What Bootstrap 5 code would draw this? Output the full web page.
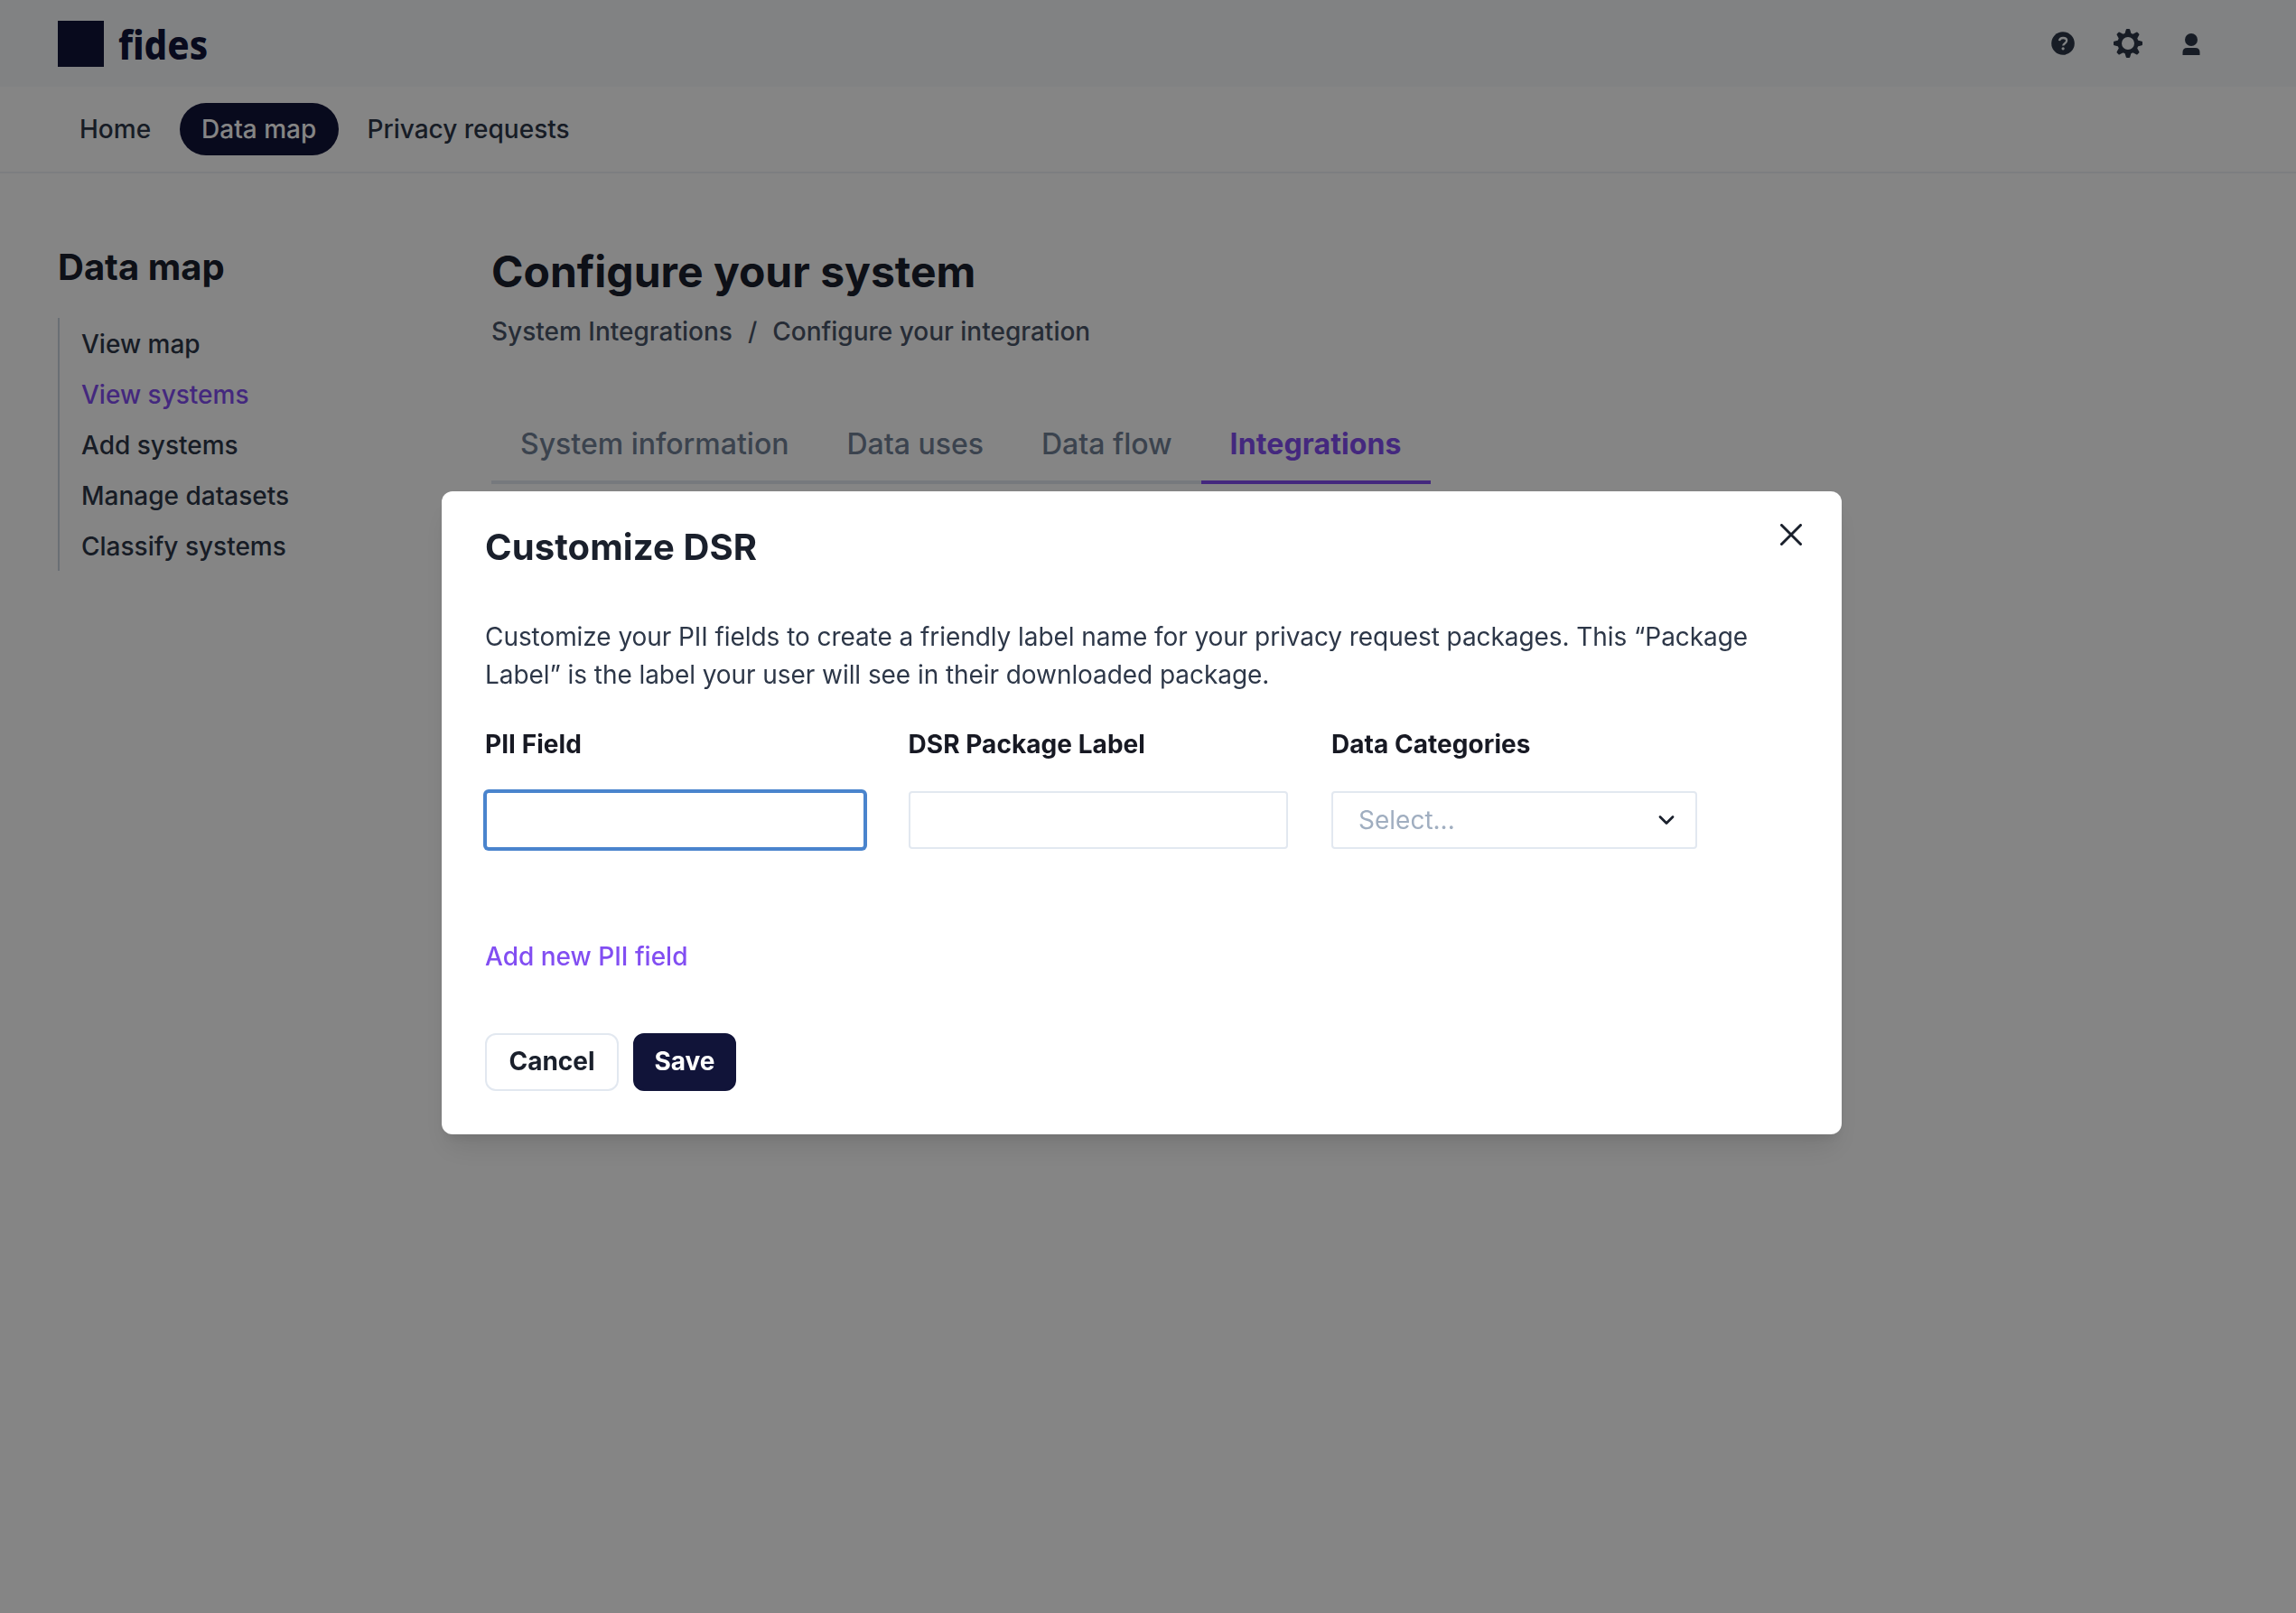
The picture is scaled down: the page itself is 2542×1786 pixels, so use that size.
<!DOCTYPE html>
<html lang="en">
<head>
<meta charset="utf-8">
<title>fides</title>
<link href="https://cdn.jsdelivr.net/npm/bootstrap@5.3.0/dist/css/bootstrap.min.css" rel="stylesheet">
<style>
body{font-family:Inter,"Liberation Sans",sans-serif;font-size:28px;line-height:42px;color:#1a202c;background:#fff;height:1786px;overflow:hidden}
.topbar{height:96px;background:#f7fafc;padding:0 105px 0 64px}
.logo-box{width:51px;height:51px;background:#111439}
.wordmark{font-family:"Noto Sans",sans-serif;font-weight:800;font-size:45px;line-height:64px;color:#111439;margin:1px 0 0 16px;transform:scaleX(.895);transform-origin:0 50%;white-space:nowrap}
.topicons{gap:43px}
.mainnav{height:96px;border-bottom:2px solid #edf2f7;padding:0 64px;gap:8px}
.mainnav .nav-link{height:58px;line-height:58px;padding:0 24px;border-radius:29px;color:#2d3748;font-weight:500}
.mainnav .nav-link.active{background:#111439;color:#fff;width:175.5px}
.sidebar{width:480px;padding:76px 0 0 64px}
.sidebar h2{font-size:40px;line-height:56px;font-weight:700;margin:0 0 28px}
.sidebar ul{border-left:2px solid #cbd5e0;padding-left:24px}
.sidebar li{height:56px;line-height:58px;font-weight:500;color:#2d3748}
.sidebar li.current,.link-violet{color:#824ef2}
.sidebar h2,.page-title{color:#1a202c}
.page-title{font-size:48px;line-height:60px;font-weight:700;margin:79px 0 15px}
.crumbs{font-weight:500;color:#4a5568;gap:17px;line-height:42px}
.tabline{margin-top:80px;height:68px}
.tabline .tab-item{padding:0 32px;height:68px;line-height:48px;font-size:32px;font-weight:500;color:#718096;border-bottom:4px solid #e2e8f0;text-decoration:none}
.tabline .tab-item.active{color:#824ef2;border-color:#824ef2;font-weight:700;letter-spacing:.12px}
.modal-backdrop{--bs-backdrop-opacity:.48}
.dsr-dialog{width:1550px;max-width:none;margin:544px 0 0 489px}
.modal-content{height:712px;border:0;border-radius:12px;padding:32px 48px 48px;box-shadow:0 20px 30px -6px rgba(0,0,0,.1),0 8px 12px -4px rgba(0,0,0,.07)}
.modal-title{font-size:40px;line-height:60px;font-weight:700;letter-spacing:.1px}
.xbtn{margin:4px -4px 0 0;line-height:0}
.intro{margin:48px 0 0;color:#2d3748;letter-spacing:-.065px}
.fields{gap:48px;margin-top:35px}
.fields label{display:block;font-weight:700;line-height:42px;margin-bottom:31px;color:#171923;letter-spacing:.05px}
.wide-col{width:420.5px}.slim-col{width:405px}
.fields .form-control{height:64px;border:2px solid #e2e8f0;border-radius:4px;font-size:28px;padding:0 28px;box-shadow:none}
.fields .is-focused{border-color:#4a84cd;box-shadow:0 0 0 2px #4a84cd}
.fields .picker{color:#a0aec0}
.addnew{margin-top:98px;font-weight:500;text-decoration:none;line-height:42px}
.actions{gap:16px;margin-top:64px}
.actions .btn{height:64px;font-size:28px;font-weight:700;border-radius:12px;padding:0;line-height:58px;padding-bottom:2px;border-width:2px}
.btn-plain{width:148px;border-color:#e2e8f0;color:#1a202c}
.btn-ink{width:114px;background:#111439;border-color:#111439;color:#fff}
</style>
<script src="https://cdn.jsdelivr.net/npm/bootstrap@5.3.0/dist/js/bootstrap.bundle.min.js"></script>
</head>
<body>
<header class="topbar d-flex align-items-center justify-content-between">
  <div class="d-flex align-items-center">
    <div class="logo-box"></div>
    <span class="wordmark">fides</span>
  </div>
  <div class="topicons d-flex align-items-center">
    <svg width="26" height="26" viewBox="0 0 26 26"><circle cx="13" cy="13" r="12.8" fill="#2d3748"/><path d="M9 10.1C9.4 8 11 7 13.1 7c2.300 0 4 1.200 4 3.100 0 2.900-3.700 2.700-3.900 5.400" fill="none" stroke="#f7fafc" stroke-width="2.300"/><circle cx="13.100" cy="18.800" r="1.600" fill="#f7fafc"/></svg>
    <svg width="32" height="32" viewBox="-16 -16 32 32" fill="#2d3748">
      <circle r="9.300" fill="none" stroke="#2d3748" stroke-width="4.600"/>
      <path id="tooth" d="M-3.600-10.500-2.200-15.200Q-2-16-1.200-16H1.200Q2-16 2.200-15.200L3.600-10.500Z"/><use href="#tooth" transform="rotate(45)"/><use href="#tooth" transform="rotate(90)"/><use href="#tooth" transform="rotate(135)"/><use href="#tooth" transform="rotate(180)"/><use href="#tooth" transform="rotate(225)"/><use href="#tooth" transform="rotate(270)"/><use href="#tooth" transform="rotate(315)"/>
    </svg>
    <svg width="22" height="26" viewBox="0 0 22 26" fill="#2d3748"><circle cx="11" cy="9" r="7"/><path d="M1.500 26V23Q1.500 18 6.500 18H15.500Q20.500 18 20.500 23V26Z"/></svg>
  </div>
</header>
<nav class="mainnav nav align-items-center flex-nowrap">
  <a class="nav-link">Home</a>
  <a class="nav-link active">Data map</a>
  <a class="nav-link">Privacy requests</a>
</nav>
<div class="d-flex">
  <aside class="sidebar flex-shrink-0">
    <h2>Data map</h2>
    <ul class="list-unstyled m-0">
      <li>View map</li>
      <li class="current">View systems</li>
      <li>Add systems</li>
      <li>Manage datasets</li>
      <li>Classify systems</li>
    </ul>
  </aside>
  <main style="padding-left:64px">
    <h1 class="page-title">Configure your system</h1>
    <div class="crumbs d-flex"><span>System Integrations</span><span>/</span><span>Configure your integration</span></div>
    <div class="tabline d-flex">
      <a class="tab-item">System information</a><a class="tab-item">Data uses</a><a class="tab-item">Data flow</a><a class="tab-item active">Integrations</a>
    </div>
  </main>
</div>
<div class="modal-backdrop show"></div>
<div class="modal d-block" role="dialog">
  <div class="modal-dialog dsr-dialog">
    <div class="modal-content">
      <div class="d-flex justify-content-between align-items-start">
        <h2 class="modal-title">Customize DSR</h2>
        <span class="xbtn" role="button"><svg width="24" height="24" viewBox="0 0 24 24" fill="none" stroke="#1a202c" stroke-width="3" stroke-linecap="round"><path d="M1.500 1.500 22.500 22.500M22.500 1.500 1.500 22.500"/></svg></span>
      </div>
      <p class="intro">Customize your PII fields to create a friendly label name for your privacy request packages. This “Package<br>Label” is the label your user will see in their downloaded package.</p>
      <div class="fields d-flex">
        <div class="wide-col"><label>PII Field</label><input class="form-control is-focused"></div>
        <div class="wide-col"><label>DSR Package Label</label><input class="form-control"></div>
        <div class="slim-col"><label>Data Categories</label>
          <div class="form-control picker d-flex align-items-center justify-content-between"><span>Select...</span>
            <svg class="flex-shrink-0" style="margin-right:-5px" width="18" height="12" viewBox="0 0 18 12" fill="none" stroke="#1a202c" stroke-width="2.800" stroke-linecap="round" stroke-linejoin="round"><path d="M2 2.500 9 9.500 16 2.500"/></svg>
          </div>
        </div>
      </div>
      <a class="addnew link-violet">Add new PII field</a>
      <div class="actions d-flex">
        <button class="btn btn-plain" type="button">Cancel</button>
        <button class="btn btn-ink" type="button">Save</button>
      </div>
    </div>
  </div>
</div>
</body>
</html>
